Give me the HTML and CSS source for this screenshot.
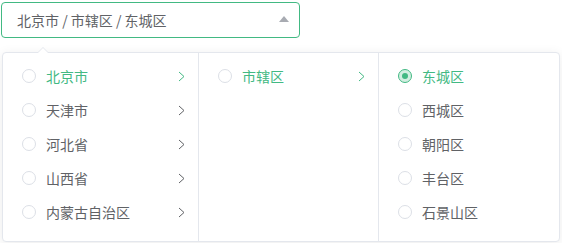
FILE: index.html
```html
<!DOCTYPE html>
<html lang="zh">
<head>
	<meta charset="UTF-8">
	<meta name="viewport" content="width=device-width, initial-scale=1.0">
	<title>Cascader</title>
	<link rel="stylesheet" href="styles.css">
</head>
<body>
	<div class="cascader">
		<div class="cascaderInput">
			<span class="value">北京市 / 市辖区 / 东城区</span>
			<span class="caret"></span>
		</div>

		<div class="panel">
			<span class="popArrow"></span>
			<ul class="menu menu1">
				<li class="node active"><span class="radio"></span><span class="label">北京市</span><svg class="chev" viewBox="0 0 7 11"><polyline points="1,1 6,5.5 1,10"/></svg></li>
				<li class="node"><span class="radio"></span><span class="label">天津市</span><svg class="chev" viewBox="0 0 7 11"><polyline points="1,1 6,5.5 1,10"/></svg></li>
				<li class="node"><span class="radio"></span><span class="label">河北省</span><svg class="chev" viewBox="0 0 7 11"><polyline points="1,1 6,5.5 1,10"/></svg></li>
				<li class="node"><span class="radio"></span><span class="label">山西省</span><svg class="chev" viewBox="0 0 7 11"><polyline points="1,1 6,5.5 1,10"/></svg></li>
				<li class="node"><span class="radio"></span><span class="label">内蒙古自治区</span><svg class="chev" viewBox="0 0 7 11"><polyline points="1,1 6,5.5 1,10"/></svg></li>
			</ul>
			<ul class="menu">
				<li class="node active"><span class="radio"></span><span class="label">市辖区</span><svg class="chev" viewBox="0 0 7 11"><polyline points="1,1 6,5.5 1,10"/></svg></li>
			</ul>
			<ul class="menu">
				<li class="node active"><span class="radio checked"></span><span class="label">东城区</span></li>
				<li class="node"><span class="radio"></span><span class="label">西城区</span></li>
				<li class="node"><span class="radio"></span><span class="label">朝阳区</span></li>
				<li class="node"><span class="radio"></span><span class="label">丰台区</span></li>
				<li class="node"><span class="radio"></span><span class="label">石景山区</span></li>
			</ul>
		</div>
	</div>
</body>
</html>
```

FILE: styles.css
```css
html, body {margin:0; padding:0; height:100%; overflow:hidden; background:#fff;}
body {font-family:"Noto Sans CJK SC", "Noto Sans", sans-serif; font-size:14px; color:#606266;}
ul {list-style:none; margin:0; padding:0;}

.cascader {position:relative; padding:2px 0 0 1px;}
.cascaderInput {box-sizing:border-box; width:299px; height:36px; border:1px solid #42b983; border-radius:4px; padding:0 15px; display:flex; align-items:center; justify-content:space-between;}
.cascaderInput .value {line-height:34px; color:#606266;}
.caret {width:0; height:0; border-left:5px solid transparent; border-right:5px solid transparent; border-bottom:6px solid #a8abb2; margin-right:-5px; margin-top:-2px;}

/* dropdown panel */
.panel {position:absolute; top:52px; left:2px; display:flex; height:188px; background:#fff; border:1px solid #e4e7ed; border-radius:4px; box-shadow:0 2px 12px rgba(0,0,0,.08);}
.popArrow {position:absolute; top:-6px; left:34px; width:0; height:0; border-left:6px solid transparent; border-right:6px solid transparent; border-bottom:6px solid #e4e7ed;}
.popArrow::after {content:""; position:absolute; left:-5px; top:1px; border-left:5px solid transparent; border-right:5px solid transparent; border-bottom:5px solid #fff;}

.menu {box-sizing:border-box; width:180px; padding:6px 0; overflow:hidden; border-right:1px solid #e4e7ed;}
.menu:last-child {border-right:none;}
.menu1 {width:196px;}

.node {position:relative; display:flex; align-items:center; height:34px; padding:0 30px 0 19px; cursor:pointer;}
.node .label {flex:1; line-height:34px;}
.node.active .label {color:#42b983;}
.radio {box-sizing:border-box; width:14px; height:14px; border:1px solid #dcdfe6; border-radius:50%; background:#fff; margin-right:10px; position:relative;}
.radio.checked {border-color:#42b983; background:#d3eee1;}
.radio.checked::after {content:""; position:absolute; left:50%; top:50%; width:6px; height:6px; margin:-3px 0 0 -3px; border-radius:50%; background:#42b983;}
.chev {position:absolute; right:13px; top:12px; width:7px; height:11px; fill:none; stroke:#606266; stroke-width:1;}
.node.active .chev {stroke:#42b983;}
```
